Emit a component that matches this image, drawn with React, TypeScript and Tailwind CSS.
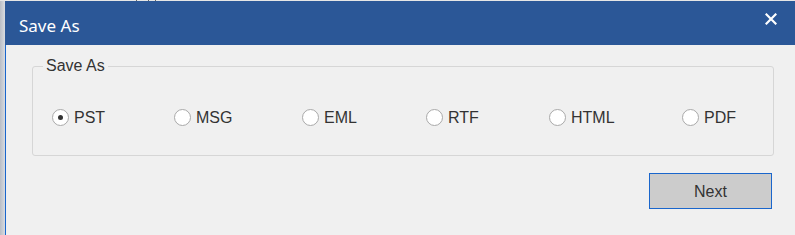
import React from "react";

const options = [
  { label: "PST", w: "w-[122px]", checked: true },
  { label: "MSG", w: "w-[128px]", checked: false },
  { label: "EML", w: "w-[124px]", checked: false },
  { label: "RTF", w: "w-[123px]", checked: false },
  { label: "HTML", w: "w-[133px]", checked: false },
  { label: "PDF", w: "w-[60px]", checked: false },
];

function Radio({ checked }: { checked: boolean }) {
  return (
    <span className="flex h-[17px] w-[17px] shrink-0 items-center justify-center rounded-full border border-[#a9a9a9] bg-white">
      {checked && <span className="h-[5px] w-[5px] rounded-full bg-[#333]" />}
    </span>
  );
}

export default function App() {
  return (
    <div className="flex h-[235px] w-[795px] flex-col overflow-hidden bg-[#f0f0f0]">
      <div className="relative h-[1px] w-full shrink-0 bg-[#e6e6e6]">
        <span className="absolute left-[136px] top-0 h-[1px] w-[1px] bg-[#666]" />
        <span className="absolute left-[148px] top-0 h-[1px] w-[1px] bg-[#666]" />
        <span className="absolute left-[155px] top-0 h-[1px] w-[1px] bg-[#666]" />
      </div>
      <div className="flex flex-1">
        <div className="w-[5px] shrink-0 bg-gradient-to-r from-[#b9bdc5] to-[#d9dce1]" />
        <div className="flex min-w-0 flex-1 flex-col">
          <div className="flex h-[44px] shrink-0 items-start justify-between bg-[#2b5797] pl-[14px] pr-[18px]">
            <span className="mt-[13px] text-[17px] leading-[24px] text-white [font-family:'Noto_Sans',sans-serif]">Save As</span>
            <svg className="mt-[12px]" width="12" height="12" viewBox="0 0 12 12">
              <path d="M1.5 1.5 L10.5 10.5 M10.5 1.5 L1.5 10.5" stroke="white" strokeWidth="2.2" strokeLinecap="square" />
            </svg>
          </div>
          <div className="flex flex-1">
            <div className="w-[1px] shrink-0 bg-[#1a66cc]" />
            <div className="flex min-w-0 flex-1 flex-col pl-[26px] pr-[21px] pt-[9px]">
              <fieldset className="m-0 h-[102px] min-w-0 rounded-[3px] border border-[#d6d6d6] pb-0 pl-[10px] pr-0 pt-0">
                <legend className="px-[3px] text-[16px] leading-[24px] text-[#333] [font-family:'Liberation_Sans',Arial,sans-serif]">Save As</legend>
                <div className="mt-[31px] flex items-center pl-[9px]">
                  {options.map((o) => (
                    <div key={o.label} className={`flex shrink-0 items-center gap-[5px] ${o.w}`}>
                      <Radio checked={o.checked} />
                      <span className="text-[16px] leading-none text-[#333] [font-family:'Liberation_Sans',Arial,sans-serif]">{o.label}</span>
                    </div>
                  ))}
                </div>
              </fieldset>
              <div className="mt-[17px] flex justify-end pr-[2px]">
                <button className="flex h-[36px] w-[123px] items-center justify-center border border-[#1a66cc] bg-[#cccccc] pt-[1px] text-[16px] text-[#333] [font-family:'Liberation_Sans',Arial,sans-serif]">
                  Next
                </button>
              </div>
            </div>
          </div>
        </div>
      </div>
    </div>
  );
}
